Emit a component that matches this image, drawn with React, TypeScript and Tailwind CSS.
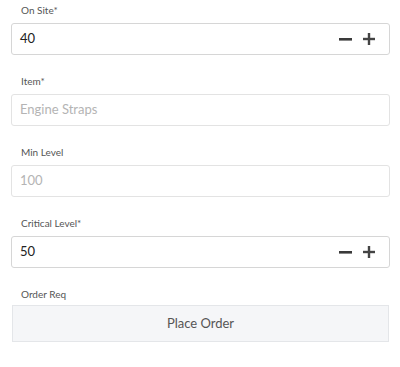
import { useState } from "react";

interface StepperProps {
  label: string;
  value: number;
  onChange: (v: number) => void;
}

function Label({ children }: { children: React.ReactNode }) {
  return (
    <div className="h-[14px] text-[10px] leading-[14px] text-[#555] pl-[10px] mb-[6px]">
      {children}
    </div>
  );
}

function Stepper({ label, value, onChange }: StepperProps) {
  return (
    <div>
      <Label>{label}</Label>
      <div className="h-[32px] border border-[#d6d6d6] rounded-[3px] bg-white flex items-center pl-[8px] pr-[14px]">
        <span className="flex-1 text-[13px] text-[#222]">{value}</span>
        <button
          className="w-[14px] h-[14px] flex items-center justify-center mr-[11px]"
          onClick={() => onChange(value - 1)}
        >
          <svg width="13" height="3" viewBox="0 0 13 3">
            <rect x="0" y="0" width="13" height="2.6" fill="#3a3a3a" />
          </svg>
        </button>
        <button
          className="w-[12px] h-[12px] flex items-center justify-center"
          onClick={() => onChange(value + 1)}
        >
          <svg width="12" height="12" viewBox="0 0 12 12">
            <rect x="0" y="4.8" width="12" height="2.4" fill="#444" />
            <rect x="4.8" y="0" width="2.4" height="12" fill="#444" />
          </svg>
        </button>
      </div>
    </div>
  );
}

function TextField({ label, placeholder }: { label: string; placeholder: string }) {
  return (
    <div>
      <Label>{label}</Label>
      <div className="h-[32px] border border-[#e3e3e3] rounded-[3px] bg-white flex items-center pl-[8px]">
        <span className="text-[13px] text-[#b4b4b4]">{placeholder}</span>
      </div>
    </div>
  );
}

export default function App() {
  const [onSite, setOnSite] = useState(40);
  const [critical, setCritical] = useState(50);

  return (
    <div
      className="w-[400px] h-[367px] bg-white pt-[3px] pl-[11px] pr-[10px] flex flex-col gap-[19px]"
      style={{ fontFamily: "Lato, 'Liberation Sans', sans-serif" }}
    >
      <Stepper label="On Site*" value={onSite} onChange={setOnSite} />
      <TextField label="Item*" placeholder="Engine Straps" />
      <TextField label="Min Level" placeholder="100" />
      <Stepper label="Critical Level*" value={critical} onChange={setCritical} />
      <div>
        <div className="h-[14px] text-[10px] leading-[14px] text-[#555] pl-[10px] mb-[4px]">
          Order Req
        </div>
        <button className="ml-[1px] w-[377px] h-[37px] bg-[#f5f6f8] border border-[#e4e6e9] text-[13px] text-[#555]">
          Place Order
        </button>
      </div>
    </div>
  );
}
